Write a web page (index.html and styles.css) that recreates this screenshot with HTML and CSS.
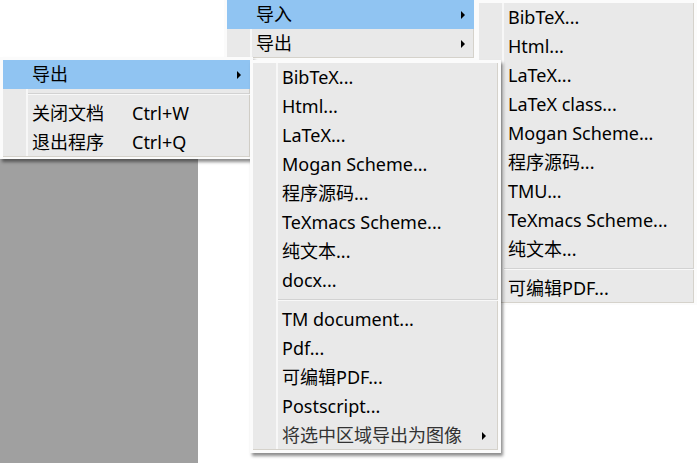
FILE: index.html
```html
<!DOCTYPE html>
<html lang="zh-CN">
<head>
<meta charset="utf-8">
<title>Menus</title>
<link rel="stylesheet" href="styles.css">
</head>
<body>
<div class="stage">
  <div class="backwin"></div>

  <div class="menu menu-top">
    <div class="list">
      <div class="item active"><span class="label">导入</span><span class="arrow"></span></div>
      <div class="item"><span class="label">导出</span><span class="arrow"></span></div>
    </div>
  </div>

  <div class="menu menu-right">
    <div class="list">
      <div class="item"><span class="label">BibTeX...</span></div>
      <div class="item"><span class="label">Html...</span></div>
      <div class="item"><span class="label">LaTeX...</span></div>
      <div class="item"><span class="label">LaTeX class...</span></div>
      <div class="item"><span class="label">Mogan Scheme...</span></div>
      <div class="item"><span class="label">程序源码...</span></div>
      <div class="item"><span class="label">TMU...</span></div>
      <div class="item"><span class="label">TeXmacs Scheme...</span></div>
      <div class="item"><span class="label">纯文本...</span></div>
      <div class="sep"></div>
      <div class="item"><span class="label">可编辑PDF...</span></div>
    </div>
  </div>

  <div class="menu menu-left">
    <div class="list">
      <div class="item active"><span class="label">导出</span><span class="arrow"></span></div>
      <div class="sep"></div>
      <div class="item"><span class="label">关闭文档</span><span class="key">Ctrl+W</span></div>
      <div class="item"><span class="label">退出程序</span><span class="key">Ctrl+Q</span></div>
    </div>
  </div>

  <div class="menu menu-mid">
    <div class="list">
      <div class="item"><span class="label">BibTeX...</span></div>
      <div class="item"><span class="label">Html...</span></div>
      <div class="item"><span class="label">LaTeX...</span></div>
      <div class="item"><span class="label">Mogan Scheme...</span></div>
      <div class="item"><span class="label">程序源码...</span></div>
      <div class="item"><span class="label">TeXmacs Scheme...</span></div>
      <div class="item"><span class="label">纯文本...</span></div>
      <div class="item"><span class="label">docx...</span></div>
      <div class="sep"></div>
      <div class="item"><span class="label">TM document...</span></div>
      <div class="item"><span class="label">Pdf...</span></div>
      <div class="item"><span class="label">可编辑PDF...</span></div>
      <div class="item"><span class="label">Postscript...</span></div>
      <div class="item sub"><span class="label">将选中区域导出为图像</span><span class="arrow"></span></div>
    </div>
  </div>
</div>
</body>
</html>
```
FILE: styles.css
```css
html, body {
  margin: 0;
  padding: 0;
  background: #ffffff;
}
body {
  width: 697px;
  height: 463px;
  overflow: hidden;
  font-family: "Noto Sans", "Noto Sans CJK SC", sans-serif;
  font-size: 18px;
  color: #000000;
}
.stage {
  position: relative;
  width: 697px;
  height: 463px;
}
.backwin {
  position: absolute;
  left: 0;
  top: 150px;
  width: 198px;
  height: 313px;
  background: #a0a0a0;
}
.menu {
  position: absolute;
  box-sizing: border-box;
  border: 3px solid #fbfbfb;
  background: #fbfbfb;
}
.list {
  display: flex;
  flex-direction: column;
  background: linear-gradient(to right, #e9e9e9 0, #e9e9e9 23px, #f7f7f7 23px, #f7f7f7 25px, #e9e9e9 25px);
  box-shadow: inset -1px -1px 0 #d5d2cb;
}
.item {
  display: flex;
  align-items: center;
  height: 29px;
  line-height: 29px;
  padding: 0 9px 0 29px;
  white-space: nowrap;
}
.item.active {
  background: #90c4f2;
}
.arrow {
  margin-left: auto;
  width: 0;
  height: 0;
  border-left: 4px solid #000000;
  border-top: 4px solid transparent;
  border-bottom: 4px solid transparent;
}
.sep {
  height: 10px;
  margin-left: 25px;
  background: linear-gradient(to bottom, transparent 4px, #d2d2d2 4px, #d2d2d2 5px, #f8f8f8 5px, #f8f8f8 6px, transparent 6px);
}
.menu-top {
  left: 224px;
  top: 0;
  width: 253px;
  border-top: 0;
  border-bottom-width: 2px;
}
.menu-right {
  left: 476px;
  top: 0;
  width: 221px;
  border-bottom-width: 2px;
}
.menu-left {
  left: 0;
  top: 57px;
  width: 253px;
  border-bottom-width: 2px;
  box-shadow: 2px 3px 3px rgba(0, 0, 0, 0.45);
}
.menu-left .label {
  width: 100px;
}
.menu-mid {
  left: 250px;
  top: 60px;
  width: 251px;
  box-shadow: 2px 3px 3px rgba(0, 0, 0, 0.45);
}
.menu-mid .sub {
  color: #333333;
  padding-right: 12px;
}
```
